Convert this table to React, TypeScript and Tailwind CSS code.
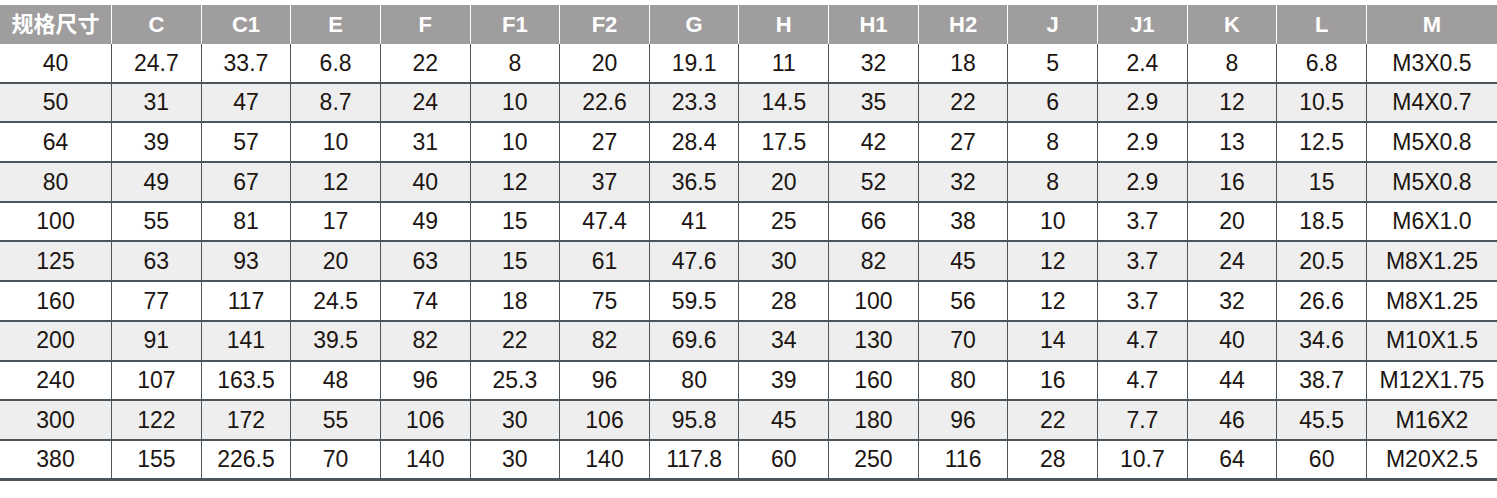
import React from 'react';

const headers = ['规格尺寸', 'C', 'C1', 'E', 'F', 'F1', 'F2', 'G', 'H', 'H1', 'H2', 'J', 'J1', 'K', 'L', 'M'];

const rows: string[][] = [
  ['40', '24.7', '33.7', '6.8', '22', '8', '20', '19.1', '11', '32', '18', '5', '2.4', '8', '6.8', 'M3X0.5'],
  ['50', '31', '47', '8.7', '24', '10', '22.6', '23.3', '14.5', '35', '22', '6', '2.9', '12', '10.5', 'M4X0.7'],
  ['64', '39', '57', '10', '31', '10', '27', '28.4', '17.5', '42', '27', '8', '2.9', '13', '12.5', 'M5X0.8'],
  ['80', '49', '67', '12', '40', '12', '37', '36.5', '20', '52', '32', '8', '2.9', '16', '15', 'M5X0.8'],
  ['100', '55', '81', '17', '49', '15', '47.4', '41', '25', '66', '38', '10', '3.7', '20', '18.5', 'M6X1.0'],
  ['125', '63', '93', '20', '63', '15', '61', '47.6', '30', '82', '45', '12', '3.7', '24', '20.5', 'M8X1.25'],
  ['160', '77', '117', '24.5', '74', '18', '75', '59.5', '28', '100', '56', '12', '3.7', '32', '26.6', 'M8X1.25'],
  ['200', '91', '141', '39.5', '82', '22', '82', '69.6', '34', '130', '70', '14', '4.7', '40', '34.6', 'M10X1.5'],
  ['240', '107', '163.5', '48', '96', '25.3', '96', '80', '39', '160', '80', '16', '4.7', '44', '38.7', 'M12X1.75'],
  ['300', '122', '172', '55', '106', '30', '106', '95.8', '45', '180', '96', '22', '7.7', '46', '45.5', 'M16X2'],
  ['380', '155', '226.5', '70', '140', '30', '140', '117.8', '60', '250', '116', '28', '10.7', '64', '60', 'M20X2.5'],
];

// column width by index: first and last are fixed, the rest share the middle
const colClass = (i: number) =>
  i === 0 ? 'w-[111px] shrink-0' : i === headers.length - 1 ? 'w-[131px] shrink-0' : 'flex-1 min-w-0';

const SpecTable: React.FC = () => {
  return (
    <div className="w-[1497px] h-[498px] bg-white pt-[5px] font-['Liberation_Sans',Arial,'Noto_Sans_CJK_SC',sans-serif]">
      {/* header */}
      <div className="flex h-[39px] bg-[#a09d9e] text-white font-bold text-[22px]">
        {headers.map((h, i) => (
          <div
            key={h}
            className={`${colClass(i)} flex items-center justify-center ${i > 0 ? 'border-l border-white' : ''}`}
          >
            {h}
          </div>
        ))}
      </div>

      {/* body */}
      {rows.map((row, r) => (
        <div
          key={r}
          className={`flex h-[39.7px] border-b-2 border-[#4b565c] text-[23px] text-[#1c1512] ${
            r % 2 === 1 ? 'bg-[#edeeed]' : 'bg-white'
          } ${r === rows.length - 1 ? 'border-b-[3px]' : ''}`}
        >
          {row.map((cell, i) => (
            <div
              key={i}
              className={`${colClass(i)} flex items-center justify-center ${i > 0 ? 'border-l border-[#4b565c]' : ''}`}
            >
              {cell}
            </div>
          ))}
        </div>
      ))}
    </div>
  );
};

export default function App() {
  return <SpecTable />;
}
